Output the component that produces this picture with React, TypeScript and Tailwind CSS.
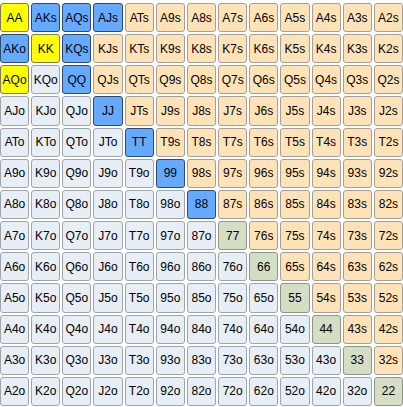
const ranks = ["A", "K", "Q", "J", "T", "9", "8", "7", "6", "5", "4", "3", "2"];

const yellow = ["AA", "KK", "AQo"];
const blue = ["AKs", "AQs", "AJs", "AKo", "KQs", "QQ", "JJ", "TT", "99", "88"];

function handName(r: number, c: number) {
  if (r === c) return ranks[r] + ranks[c];
  if (c > r) return ranks[r] + ranks[c] + "s";
  return ranks[c] + ranks[r] + "o";
}

function cellClass(name: string, r: number, c: number) {
  if (yellow.includes(name)) return "bg-[#ffff00] border-[#7c7c5c]";
  if (blue.includes(name)) return "bg-[#66aaff] border-[#2e4a6e]";
  if (r === c) return "bg-[#d3dec4] border-[#8e9488]";
  if (c > r) return "bg-[#ffe3b8] border-[#a4a098]";
  return "bg-[#e7eef6] border-[#9ea4ac]";
}

const App = () => {
  return (
    <div className="w-[403px] h-[407px] bg-white pt-[3px] pb-[1px]">
      <div className="grid grid-cols-13 grid-rows-13 gap-[2px] h-full">
        {ranks.map((_, r) =>
          ranks.map((_, c) => {
            const name = handName(r, c);
            return (
              <div
                key={name}
                className={`flex items-center justify-center rounded-[3px] border font-['Liberation_Sans',Arial,sans-serif] text-[12px] text-black leading-none ${cellClass(name, r, c)}`}
              >
                {name}
              </div>
            );
          })
        )}
      </div>
    </div>
  );
};

export default App;
